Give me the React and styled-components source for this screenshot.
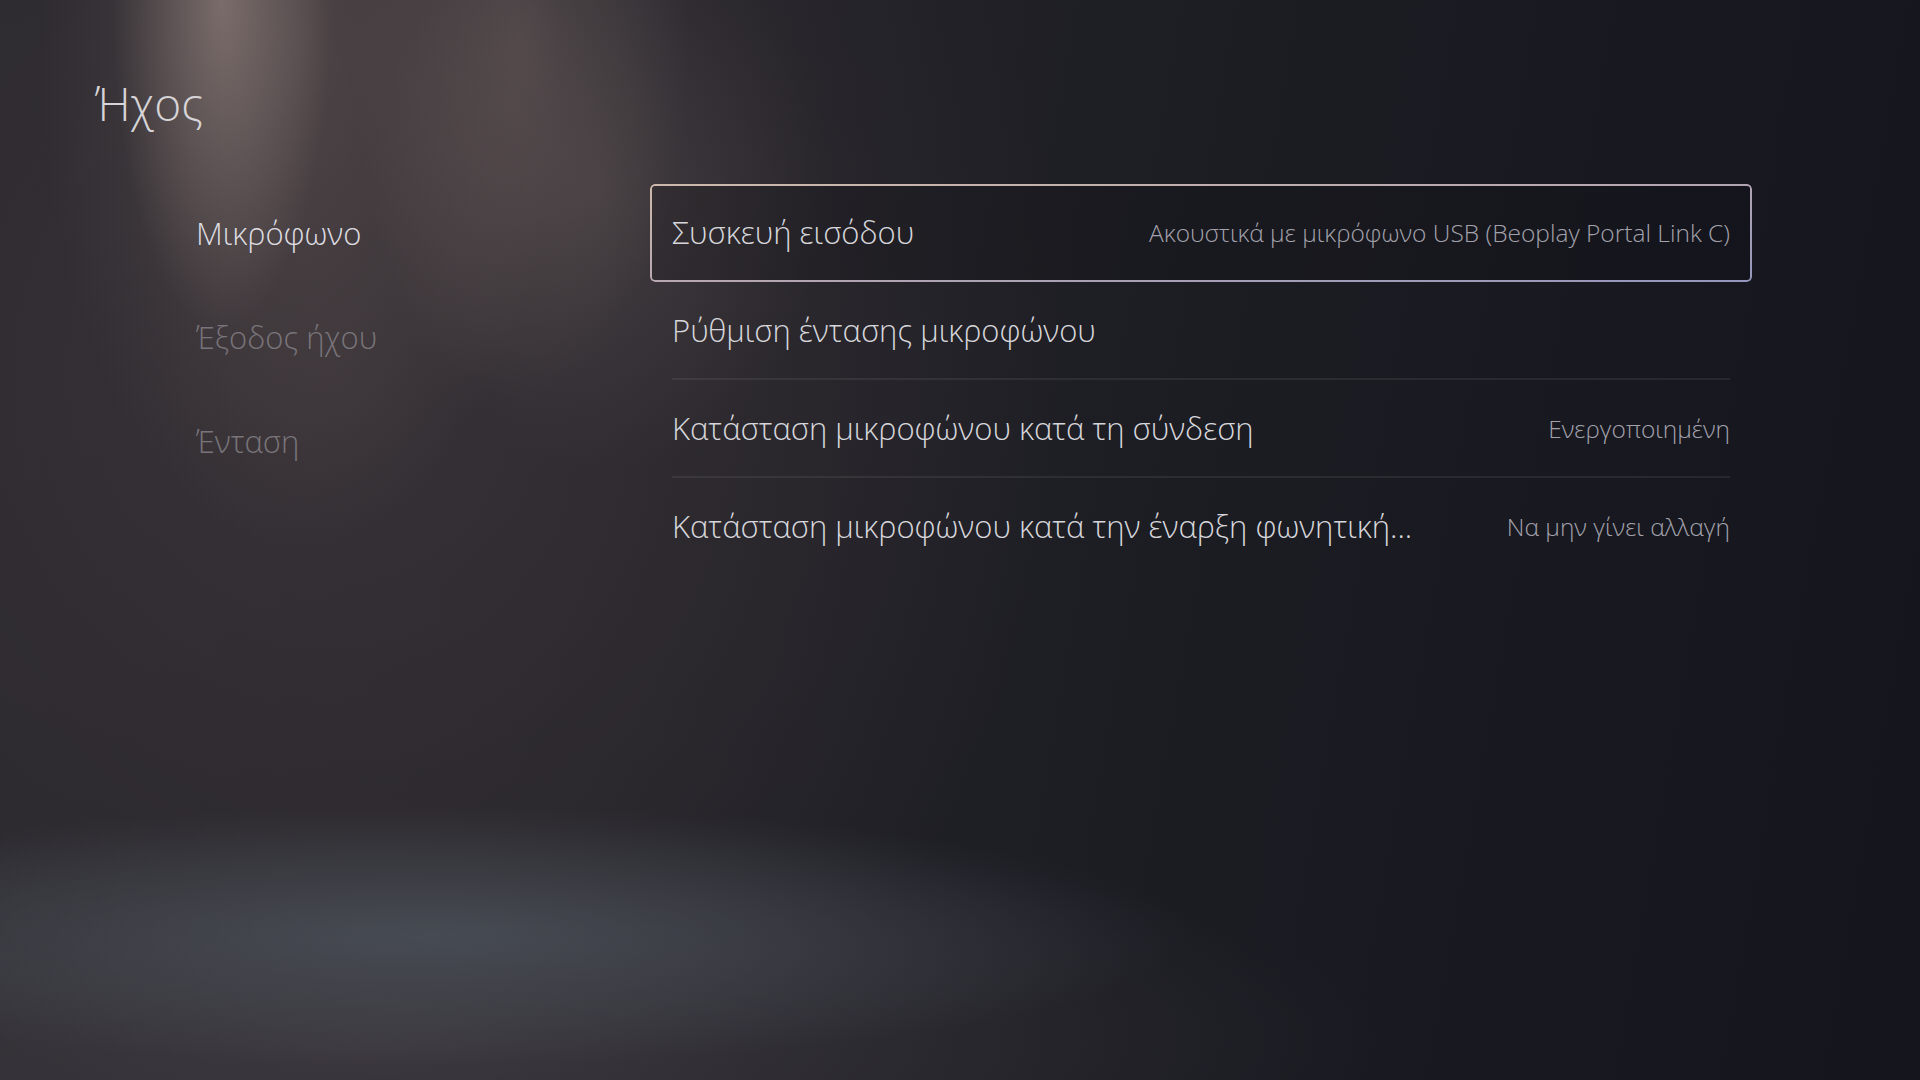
import React from "react"
import styled, { createGlobalStyle } from "styled-components"

const GlobalStyle = createGlobalStyle`
  html, body {
    margin: 0;
    padding: 0;
    background: #16171e;
  }
  body {
    font-family: "Open Sans", "Noto Sans", sans-serif;
    -webkit-font-smoothing: antialiased;
  }
`

// background: spotlight cones top-left, cold haze bottom-left, navy on the right
const Screen = styled.div`
  width: 1920px;
  height: 1080px;
  overflow: hidden;
  background:
    radial-gradient(ellipse 110px 330px at 222px 0px, rgba(175, 155, 148, 0.5), rgba(175, 155, 148, 0) 100%),
    radial-gradient(ellipse 260px 520px at 300px 40px, rgba(130, 112, 108, 0.35), rgba(130, 112, 108, 0) 100%),
    radial-gradient(ellipse 170px 360px at 520px 40px, rgba(140, 122, 118, 0.3), rgba(140, 122, 118, 0) 100%),
    radial-gradient(ellipse 230px 280px at 600px 190px, rgba(120, 106, 104, 0.26), rgba(120, 106, 104, 0) 100%),
    radial-gradient(ellipse 760px 130px at 430px 935px, rgba(82, 92, 100, 0.6), rgba(82, 92, 100, 0) 100%),
    radial-gradient(ellipse 1000px 220px at 380px 1040px, rgba(74, 68, 76, 0.6), rgba(74, 68, 76, 0) 100%),
    radial-gradient(ellipse 750px 800px at 330px 380px, rgba(62, 54, 58, 0.7), rgba(62, 54, 58, 0) 100%),
    linear-gradient(100deg, #29282e 0%, #26252b 30%, #1c1c23 60%, #14151d 100%);
`

const Header = styled.header`
  padding: 75px 0 0 95px;
`

const Title = styled.h1`
  margin: 0;
  font-size: 46px;
  line-height: 56px;
  font-weight: 300;
  color: #d6d4d7;
`

const Body = styled.div`
  display: grid;
  grid-template-columns: 454px 1102px;
  margin: 53px 0 0 196px;
`

const Sidebar = styled.nav`
  display: flex;
  flex-direction: column;
  gap: 6px;
`

const SideItem = styled.div`
  height: 98px;
  display: flex;
  align-items: center;
  font-size: 31px;
  font-weight: 300;
  color: ${p => (p.$active ? "#dedce0" : "#78747a")};
`

const List = styled.div`
  display: flex;
  flex-direction: column;
`

const Row = styled.div`
  position: relative;
  height: 98px;
  box-sizing: border-box;
  padding: 0 22px;
  border-radius: 5px;
  background: ${p => (p.$focused ? "rgba(14, 14, 20, 0.22)" : "transparent")};

  /* focus ring with a gradient edge */
  &::before {
    content: "";
    display: ${p => (p.$focused ? "block" : "none")};
    position: absolute;
    inset: 0;
    padding: 2px;
    border-radius: 5px;
    background: linear-gradient(174deg, #cdb9ab 0%, #b8a8b0 45%, #9496bc 100%);
    -webkit-mask: linear-gradient(#000 0 0) content-box, linear-gradient(#000 0 0);
    -webkit-mask-composite: xor;
    mask-composite: exclude;
  }
`

const RowInner = styled.div`
  height: 100%;
  box-sizing: border-box;
  display: flex;
  align-items: center;
  justify-content: space-between;
  gap: 40px;
  border-bottom: 2px solid ${p => (p.$line ? "rgba(255, 255, 255, 0.07)" : "transparent")};
`

const Label = styled.span`
  font-size: 31px;
  font-weight: 300;
  color: #d6d6db;
  white-space: nowrap;
`

const Value = styled.span`
  font-size: 24.5px;
  font-weight: 300;
  color: #a3a2ac;
  white-space: nowrap;
`

const rows = [
  { label: "Συσκευή εισόδου", value: "Ακουστικά με μικρόφωνο USB (Beoplay Portal Link C)", focused: true },
  { label: "Ρύθμιση έντασης μικροφώνου", line: true },
  { label: "Κατάσταση μικροφώνου κατά τη σύνδεση", value: "Ενεργοποιημένη", line: true },
  { label: "Κατάσταση μικροφώνου κατά την έναρξη φωνητική...", value: "Να μην γίνει αλλαγή" },
]

export default function App() {
  return (
    <Screen>
      <GlobalStyle />
      <Header>
        <Title>Ήχος</Title>
      </Header>
      <Body>
        <Sidebar>
          <SideItem $active>Μικρόφωνο</SideItem>
          <SideItem>Έξοδος ήχου</SideItem>
          <SideItem>Ένταση</SideItem>
        </Sidebar>
        <List>
          {rows.map(r => (
            <Row key={r.label} $focused={r.focused}>
              <RowInner $line={r.line}>
                <Label>{r.label}</Label>
                {r.value && <Value>{r.value}</Value>}
              </RowInner>
            </Row>
          ))}
        </List>
      </Body>
    </Screen>
  )
}
